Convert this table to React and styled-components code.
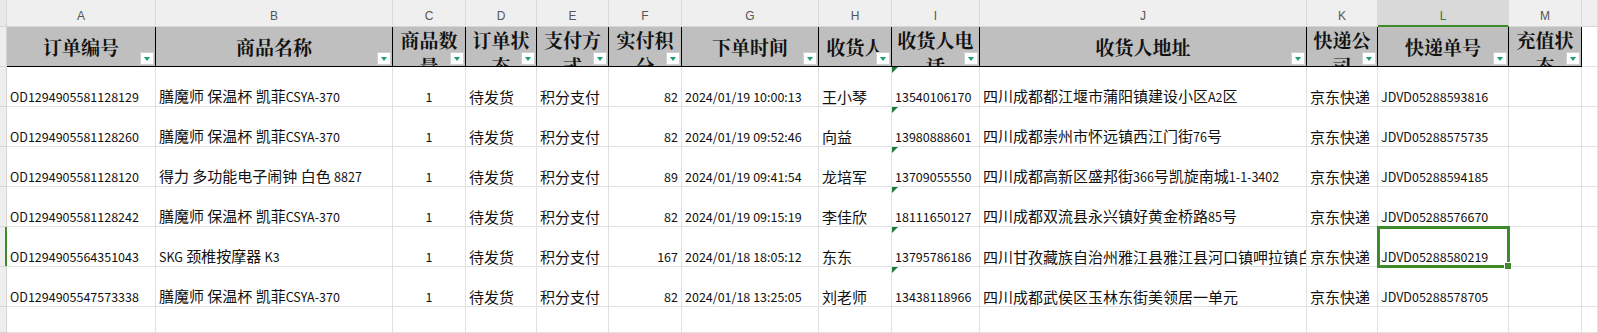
import React from "react";
import styled, { createGlobalStyle } from "styled-components";

const GlobalStyle = createGlobalStyle`
  body {
    margin: 0;
    background: #fff;
    overflow: hidden;
  }
`;

const GREEN = "#3f8a2a";
const GRID = "#e1e1e1";

const widths = [149, 237, 73, 71, 72, 73, 137, 73, 88, 327, 71, 131, 73];
const letters = "ABCDEFGHIJKLM".split("");
const headers = [
  "订单编号",
  "商品名称",
  "商品数量",
  "订单状态",
  "支付方式",
  "实付积分",
  "下单时间",
  "收货人",
  "收货人电话",
  "收货人地址",
  "快递公司",
  "快递单号",
  "充值状态",
];
// how each column lines up its data
const aligns = ["left", "left", "center", "left", "left", "right", "left", "left", "left", "left", "left", "left", "left"];
// columns holding plain numbers / codes
const numeric = [true, false, true, false, false, true, true, false, true, false, false, true, false];

const rows = [
  ["OD1294905581128129", "膳魔师 保温杯 凯菲CSYA-370", "1", "待发货", "积分支付", "82", "2024/01/19 10:00:13", "王小琴", "13540106170", "四川成都都江堰市蒲阳镇建设小区A2区", "京东快递", "JDVD05288593816", ""],
  ["OD1294905581128260", "膳魔师 保温杯 凯菲CSYA-370", "1", "待发货", "积分支付", "82", "2024/01/19 09:52:46", "向益", "13980888601", "四川成都崇州市怀远镇西江门街76号", "京东快递", "JDVD05288575735", ""],
  ["OD1294905581128120", "得力 多功能电子闹钟 白色 8827", "1", "待发货", "积分支付", "89", "2024/01/19 09:41:54", "龙培军", "13709055550", "四川成都高新区盛邦街366号凯旋南城1-1-3402", "京东快递", "JDVD05288594185", ""],
  ["OD1294905581128242", "膳魔师 保温杯 凯菲CSYA-370", "1", "待发货", "积分支付", "82", "2024/01/19 09:15:19", "李佳欣", "18111650127", "四川成都双流县永兴镇好黄金桥路85号", "京东快递", "JDVD05288576670", ""],
  ["OD1294905564351043", "SKG 颈椎按摩器 K3", "1", "待发货", "积分支付", "167", "2024/01/18 18:05:12", "东东", "13795786186", "四川甘孜藏族自治州雅江县雅江县河口镇呷拉镇白", "京东快递", "JDVD05288580219", ""],
  ["OD1294905547573338", "膳魔师 保温杯 凯菲CSYA-370", "1", "待发货", "积分支付", "82", "2024/01/18 13:25:05", "刘老师", "13438118966", "四川成都武侯区玉林东街美领居一单元", "京东快递", "JDVD05288578705", ""],
];

const ACTIVE_ROW = 4;
const ACTIVE_COL = 11;
const FLAG_COL = 8;

export default function App() {
  return (
    <>
      <GlobalStyle />
      <Sheet>
        <Corner />
        {letters.map((l, i) => (
          <ColLetter key={l} selected={i === ACTIVE_COL}>
            {l}
          </ColLetter>
        ))}
        <ColLetter />

        <RowStrip />
        {headers.map((h) => (
          <HeadCell key={h}>
            <HeadText>{h}</HeadText>
            <FilterBtn />
          </HeadCell>
        ))}
        <Cell />

        {rows.map((row, r) => (
          <React.Fragment key={r}>
            <RowStrip selected={r === ACTIVE_ROW} />
            {row.map((val, c) => {
              const active = r === ACTIVE_ROW && c === ACTIVE_COL;
              return (
                <Cell key={c} align={aligns[c]} active={active}>
                  {c === FLAG_COL && <ErrMark />}
                  <CellText numeric={numeric[c]}>{splitRuns(val)}</CellText>
                  {active && (
                    <Selection>
                      <Handle />
                    </Selection>
                  )}
                </Cell>
              );
            })}
            <Cell />
          </React.Fragment>
        ))}

        <RowStrip />
        {widths.map((w, i) => (
          <Cell key={i} />
        ))}
        <Cell />
      </Sheet>
    </>
  );
}

// latin runs in a mixed string get the smaller latin face
function splitRuns(text) {
  return text
    .split(/([\x21-\x7e]+)/)
    .filter((s) => s !== "")
    .map((s, i) => (/^[\x21-\x7e]+$/.test(s) ? <Latin key={i}>{s}</Latin> : s));
}

const Sheet = styled.div`
  display: grid;
  grid-template-columns: 7px ${widths.map((w) => w + "px").join(" ")} 1fr;
  grid-template-rows: 27px 40px repeat(6, 40px) 1fr;
  width: 1598px;
  height: 333px;
  overflow: hidden;
`;

const Corner = styled.div`
  background: #e8e8e8;
  border-right: 1px solid #d6d6d6;
  border-bottom: 1px solid #d6d6d6;
`;

const ColLetter = styled.div`
  display: flex;
  align-items: center;
  justify-content: center;
  padding-top: 6px;
  box-sizing: border-box;
  background: ${(p) => (p.selected ? "#d9d9d9" : "#efefef")};
  color: ${(p) => (p.selected ? "#2f7d32" : "#555")};
  border-right: 1px solid #dadada;
  border-bottom: ${(p) => (p.selected ? `2px solid ${GREEN}` : "1px solid #d6d6d6")};
  font-family: "Liberation Sans", Arial, sans-serif;
  font-size: 12px;
`;

const RowStrip = styled.div`
  background: #eeeeee;
  border-bottom: 1px solid #d6d6d6;
  box-sizing: border-box;
  box-shadow: ${(p) => (p.selected ? `inset -2px 0 0 ${GREEN}` : "inset -1px 0 0 #d6d6d6")};
`;

const HeadCell = styled.div`
  position: relative;
  display: flex;
  align-items: safe center;
  justify-content: center;
  overflow: hidden;
  box-sizing: border-box;
  padding: 0 2px;
  background: #bfbfbf;
  border-right: 1px solid #000;
  border-bottom: 1px solid #000;
`;

const HeadText = styled.div`
  text-align: center;
  font-family: "Noto Serif CJK SC", "Noto Sans CJK SC", serif;
  font-weight: 700;
  font-size: 19px;
  line-height: 26px;
  color: #111;
  word-break: break-all;
`;

const FilterBtn = styled.span`
  position: absolute;
  right: 1px;
  bottom: 1px;
  width: 14px;
  height: 13px;
  box-sizing: border-box;
  background: #fff;
  border: 1px solid #d0d0d0;

  &::after {
    content: "";
    position: absolute;
    left: 3px;
    top: 4px;
    border-left: 3.5px solid transparent;
    border-right: 3.5px solid transparent;
    border-top: 4px solid #1aa36b;
  }
`;

const Cell = styled.div`
  position: relative;
  display: flex;
  align-items: flex-end;
  justify-content: ${(p) =>
    p.align === "right" ? "flex-end" : p.align === "center" ? "center" : "flex-start"};
  min-width: 0;
  box-sizing: border-box;
  padding: 0 3px;
  border-right: 1px solid ${GRID};
  border-bottom: 1px solid ${GRID};
  overflow: ${(p) => (p.active ? "visible" : "hidden")};
  white-space: nowrap;
  color: #111;
`;

const CellText = styled.span`
  font-family: "Noto Sans CJK SC", "Noto Sans", sans-serif;
  font-size: ${(p) => (p.numeric ? "12.5px" : "15px")};
  line-height: 18px;
`;

const Latin = styled.span`
  font-size: 12.5px;
`;

const ErrMark = styled.span`
  position: absolute;
  left: 0;
  top: 0;
  width: 0;
  height: 0;
  border-top: 6px solid #1d7a3a;
  border-right: 6px solid transparent;
`;

const Selection = styled.div`
  position: absolute;
  z-index: 2;
  left: -1px;
  top: -1px;
  right: -2px;
  bottom: -2px;
  border: 3px solid ${GREEN};
  pointer-events: none;
`;

const Handle = styled.span`
  position: absolute;
  right: -5px;
  bottom: -5px;
  width: 6px;
  height: 6px;
  background: ${GREEN};
  border: 1px solid #fff;
`;
